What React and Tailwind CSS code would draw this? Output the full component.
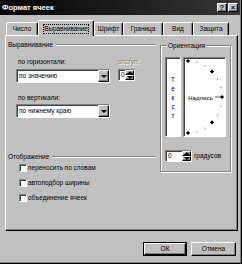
import React from "react";

// win9x style bevels
const raised =
  "border border-t-white border-l-white border-r-black border-b-black shadow-[inset_-1px_-1px_0_#808080]";
const sunken =
  "border border-t-[#808080] border-l-[#808080] border-r-white border-b-white shadow-[inset_1px_1px_0_#404040]";

const ArrowDown = () => (
  <div className="w-0 h-0 border-x-[3px] border-x-transparent border-t-[3px] border-t-black" />
);
const ArrowUp = () => (
  <div className="w-0 h-0 border-x-[3px] border-x-transparent border-b-[3px] border-b-black" />
);

const Heading = ({ text }) => (
  <div className="flex items-center h-[10px] pr-[2px]">
    <span className="leading-[10px]">{text}</span>
    <div className="flex-1 ml-[3px] h-[2px] border-t border-t-[#808080] border-b border-b-white" />
  </div>
);

const Dropdown = ({ text, className }) => (
  <div className={`flex w-[94px] h-[14px] bg-white ${sunken} ${className}`}>
    <div className="flex-1 pl-[2px] leading-[12px]">{text}</div>
    <div className={`w-[11px] h-full bg-[#c0c0c0] flex items-center justify-center ${raised}`}>
      <ArrowDown />
    </div>
  </div>
);

const Spinner = ({ className }) => (
  <div className={`flex bg-white ${sunken} ${className}`}>
    <div className="flex-1 pl-[2px] leading-[10px]">0</div>
    <div className="w-[9px] h-full flex flex-col">
      <div className={`flex-1 bg-[#c0c0c0] flex items-center justify-center ${raised}`}>
        <ArrowUp />
      </div>
      <div className={`flex-1 bg-[#c0c0c0] flex items-center justify-center ${raised}`}>
        <ArrowDown />
      </div>
    </div>
  </div>
);

const Checkbox = ({ label }) => (
  <div className="flex items-center h-[10px] pl-[11px]">
    <div className={`w-[8px] h-[8px] bg-white ${sunken}`} />
    <span className="ml-[1px] leading-[10px]">{label}</span>
  </div>
);

const tabs = [
  { name: "Число", w: "w-[32px]" },
  { name: "Выравнивание", w: "w-[56px]", active: true },
  { name: "Шрифт", w: "w-[29px]" },
  { name: "Граница", w: "w-[40px]" },
  { name: "Вид", w: "w-[30px]" },
  { name: "Защита", w: "w-[36px]" },
];

const Dial = () => {
  const dots = [];
  for (let a = -90; a <= 90; a += 15) {
    const r = (a * Math.PI) / 180;
    dots.push({
      x: 4 + 34 * Math.cos(r),
      y: 39 - 36 * Math.sin(r),
      big: a % 45 === 0,
    });
  }
  return (
    <svg width="41" height="78" viewBox="0 0 41 78">
      {dots.map((d, i) =>
        d.big ? (
          <rect
            key={i}
            x={d.x - 1.5}
            y={d.y - 1.5}
            width="3"
            height="3"
            fill="#000"
            transform={`rotate(45 ${d.x} ${d.y})`}
          />
        ) : (
          <rect key={i} x={d.x - 0.5} y={d.y - 0.5} width="1" height="1" fill="#404040" />
        )
      )}
      <text
        x="4"
        y="41.5"
        fontSize="6"
        textLength="25"
        lengthAdjust="spacingAndGlyphs"
        fontFamily="Liberation Sans, Arial, sans-serif"
        fill="#000"
      >
        Надпись
      </text>
      <line x1="31" y1="39" x2="37" y2="39" stroke="#606060" strokeWidth="1" />
    </svg>
  );
};

export default function App() {
  return (
    <div
      className={`w-[242px] h-[264px] bg-[#c0c0c0] flex flex-col text-[6.5px] text-black font-['Liberation_Sans',Arial,sans-serif] border-r border-b border-black shadow-[inset_-1px_-1px_0_#808080]`}
    >
      {/* Title bar */}
      <div className="h-[15px] mr-[1px] flex items-center pl-[2px] pr-[2px] bg-gradient-to-r from-[#050505] to-[#383838]">
        <span className="flex-1 text-white font-bold text-[7.5px] leading-[15px]">Формат ячеек</span>
        <div className={`w-[10px] h-[9px] bg-[#c0c0c0] flex items-center justify-center font-bold text-[7px] leading-none ${raised}`}>
          ?
        </div>
        <div className={`w-[10px] h-[9px] ml-[1px] bg-[#c0c0c0] flex items-center justify-center font-bold text-[7px] leading-none ${raised}`}>
          ×
        </div>
      </div>

      {/* Tabs */}
      <div className="mt-[5px] h-[15px] pl-[6px] flex items-end">
        {tabs.map((t) =>
          t.active ? (
            <div
              key={t.name}
              className={`${t.w} h-[16px] mb-[-1px] relative z-10 bg-[#c0c0c0] rounded-t-[2px] border-t border-l border-white border-r border-r-black shadow-[inset_-1px_0_0_#808080] flex items-center justify-center`}
            >
              <span className="border border-dotted border-black leading-[8px] tracking-[-0.1px]">{t.name}</span>
            </div>
          ) : (
            <div
              key={t.name}
              className={`${t.w} h-[13px] rounded-t-[2px] border-t border-l border-white border-r border-r-black shadow-[inset_-1px_0_0_#808080] flex items-center justify-center leading-[10px]`}
            >
              {t.name}
            </div>
          )
        )}
      </div>

      {/* Panel */}
      <div className="ml-[5px] w-[233px] h-[196px] border border-t-white border-l-white border-r-black border-b-black shadow-[inset_-1px_-1px_0_#808080] flex">
        {/* Left column */}
        <div className="w-[152px] pl-[2px] pt-[4px]">
          <Heading text="Выравнивание" />
          <div className="flex mt-[8px] pl-[8px]">
            <div className="w-[94px]">
              <div className="h-[8px] leading-[8px] pl-[2px]">по горизонтали:</div>
              <Dropdown text="по значению" className="mt-[3px]" />
              <div className="h-[8px] leading-[8px] pl-[2px] mt-[11px]">по вертикали:</div>
              <Dropdown text="по нижнему краю" className="mt-[2px]" />
            </div>
            <div className="ml-[8px]">
              <div className="h-[8px] leading-[8px] text-[#808080] [text-shadow:1px_1px_0_#fff]">отступ:</div>
              <Spinner className="mt-[3px] w-[17px] h-[12px]" />
            </div>
          </div>
          <div className="mt-[34px]">
            <Heading text="Отображение" />
          </div>
          <div className="mt-[1px] flex flex-col gap-[5px]">
            <Checkbox label="переносить по словам" />
            <Checkbox label="автоподбор ширины" />
            <Checkbox label="объединение ячеек" />
          </div>
        </div>

        {/* Orientation */}
        <fieldset className="ml-[2px] mt-[5px] w-[71px] h-[131px] px-[4px] border border-[#808080] shadow-[inset_1px_1px_0_#fff,1px_1px_0_#fff]">
          <legend className="ml-[2px] px-[1px] leading-[9px] bg-[#c0c0c0]">Ориентация</legend>
          <div className="flex gap-[2px] mt-[7px]">
            <div className={`w-[16px] h-[80px] bg-white ${sunken} flex flex-col items-center justify-center`}>
              {["Т", "е", "к", "с", "т"].map((c, i) => (
                <span key={i} className="leading-[9px]">
                  {c}
                </span>
              ))}
            </div>
            <div className={`w-[43px] h-[80px] bg-white ${sunken}`}>
              <Dial />
            </div>
          </div>
          <div className="flex items-center mt-[13px]">
            <Spinner className="w-[27px] h-[12px]" />
            <span className="ml-[2px] leading-[10px]">градусов</span>
          </div>
        </fieldset>
      </div>

      {/* Buttons */}
      <div className="mt-[11px] flex justify-end gap-[4px] pr-[5px]">
        <div className="w-[44px] h-[14px] border border-black">
          <div className={`w-full h-full flex items-center justify-center leading-none ${raised}`}>ОК</div>
        </div>
        <div className={`w-[45px] h-[14px] flex items-center justify-center leading-none ${raised}`}>Отмена</div>
      </div>
    </div>
  );
}
